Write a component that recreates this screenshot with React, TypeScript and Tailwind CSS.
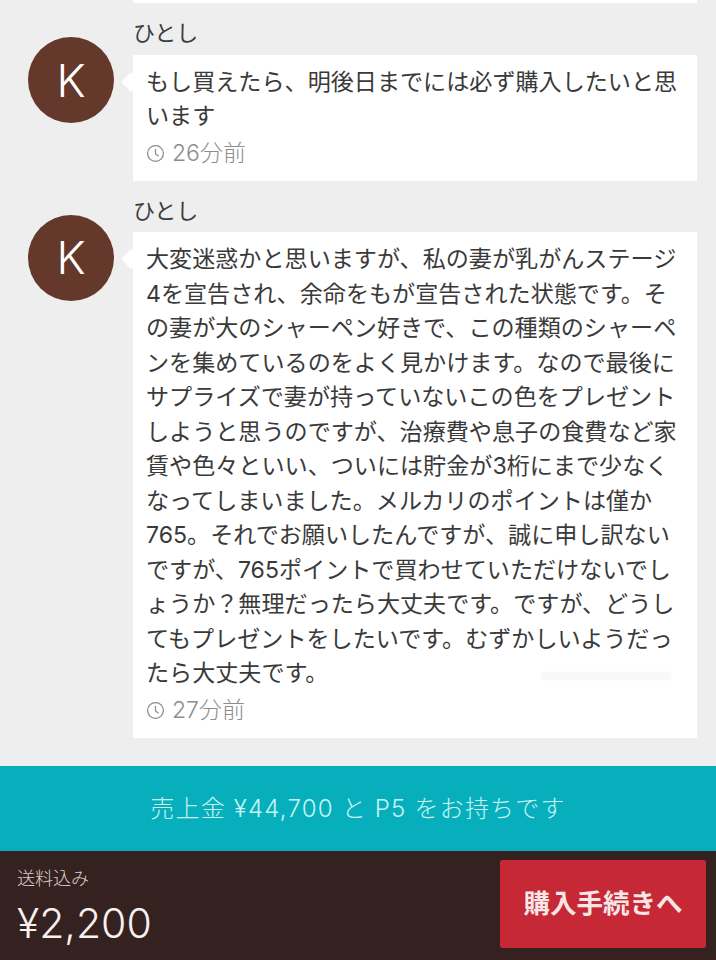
import React from 'react';

const FONT = "font-['Inter','Noto_Sans_CJK_JP',sans-serif]";

interface CommentProps {
  name: string;
  lines: string[];
  time: string;
  children?: React.ReactNode;
}

const ClockIcon: React.FC = () => (
  <svg viewBox="0 0 20 20" className="h-[19px] w-[19px] shrink-0 text-[#8a8a8a]" fill="none" stroke="currentColor" strokeWidth="1.3">
    <circle cx="10" cy="10" r="8.3" />
    <path d="M10 5.2V10.4L13.4 12.8" />
  </svg>
);

const Comment: React.FC<CommentProps> = ({ name, lines, time, children }) => (
  <div className="flex">
    <div className="ml-[28px] mt-[34px] flex h-[86px] w-[86px] shrink-0 items-center justify-center rounded-full bg-[#64392c] text-[45px] font-light leading-none text-white">
      K
    </div>
    <div className="ml-[19px] w-[564px]">
      <p className="h-[51.5px] pt-[15px] text-[22px] leading-[30px] text-[#3d3d3d]">{name}</p>
      <div className="relative bg-white pl-[13px] pt-[10px] pb-[9px]">
        <span className="absolute left-[-9px] top-[20px] h-[14px] w-[14px] rotate-45 bg-white" />
        {children}
        {lines.map((line) => (
          <p key={line} className="whitespace-nowrap text-[23.1px] leading-[34.5px] text-[#3a3a3a]">{line}</p>
        ))}
        <div className="mt-[2px] flex h-[36px] items-center gap-[7px] text-[23px] font-light text-[#8d8d8d]">
          <ClockIcon />
          <span>{time}</span>
        </div>
      </div>
    </div>
  </div>
);

const App: React.FC = () => {
  return (
    <div className={`flex h-[960px] w-[716px] flex-col overflow-hidden bg-[#eeeeee] ${FONT}`}>
      <div className="flex-1">
        <div className="ml-[133px] h-[3px] w-[564px] bg-white" />
        <Comment
          name="ひとし"
          lines={['もし買えたら、明後日までには必ず購入したいと思', 'います']}
          time="26分前"
        />
        <Comment
          name="ひとし"
          lines={[
            '大変迷惑かと思いますが、私の妻が乳がんステージ',
            '4を宣告され、余命をもが宣告された状態です。そ',
            'の妻が大のシャーペン好きで、この種類のシャーペ',
            'ンを集めているのをよく見かけます。なので最後に',
            'サプライズで妻が持っていないこの色をプレゼント',
            'しようと思うのですが、治療費や息子の食費など家',
            '賃や色々といい、ついには貯金が3桁にまで少なく',
            'なってしまいました。メルカリのポイントは僅か',
            '765。それでお願いしたんですが、誠に申し訳ない',
            'ですが、765ポイントで買わせていただけないでし',
            'ょうか？無理だったら大丈夫です。ですが、どうし',
            'てもプレゼントをしたいです。むずかしいようだっ',
            'たら大丈夫です。',
          ]}
          time="27分前"
        >
          {/* faint illegible watermark */}
          <span className="absolute left-[408px] top-[440px] h-[8px] w-[130px] bg-[#f8f8f8] blur-[1px]" />
        </Comment>
      </div>
      <div className="flex h-[85px] items-center justify-center bg-[#07afbd] text-[24px] font-light tracking-[1.2px] text-[#c9f3f2]">
        売上金 ¥44,700 と P5 をお持ちです
      </div>
      <div className="flex h-[109px] items-start justify-between bg-[#352120] pl-[17px] pr-[10px] pt-[9px]">
        <div className="text-[#f7f1ef]">
          <p className="mt-[6px] text-[18px] font-light leading-[26px] text-[#d9cfcc]">送料込み</p>
          <p className="mt-[7px] text-[41px] font-light leading-[48px]">¥2,200</p>
        </div>
        <button className="flex h-[88px] w-[206px] items-center justify-center rounded-[3px] bg-[#c72835] text-[26.5px] font-bold text-[#f6e6e6]">
          購入手続きへ
        </button>
      </div>
    </div>
  );
};

export default App;
